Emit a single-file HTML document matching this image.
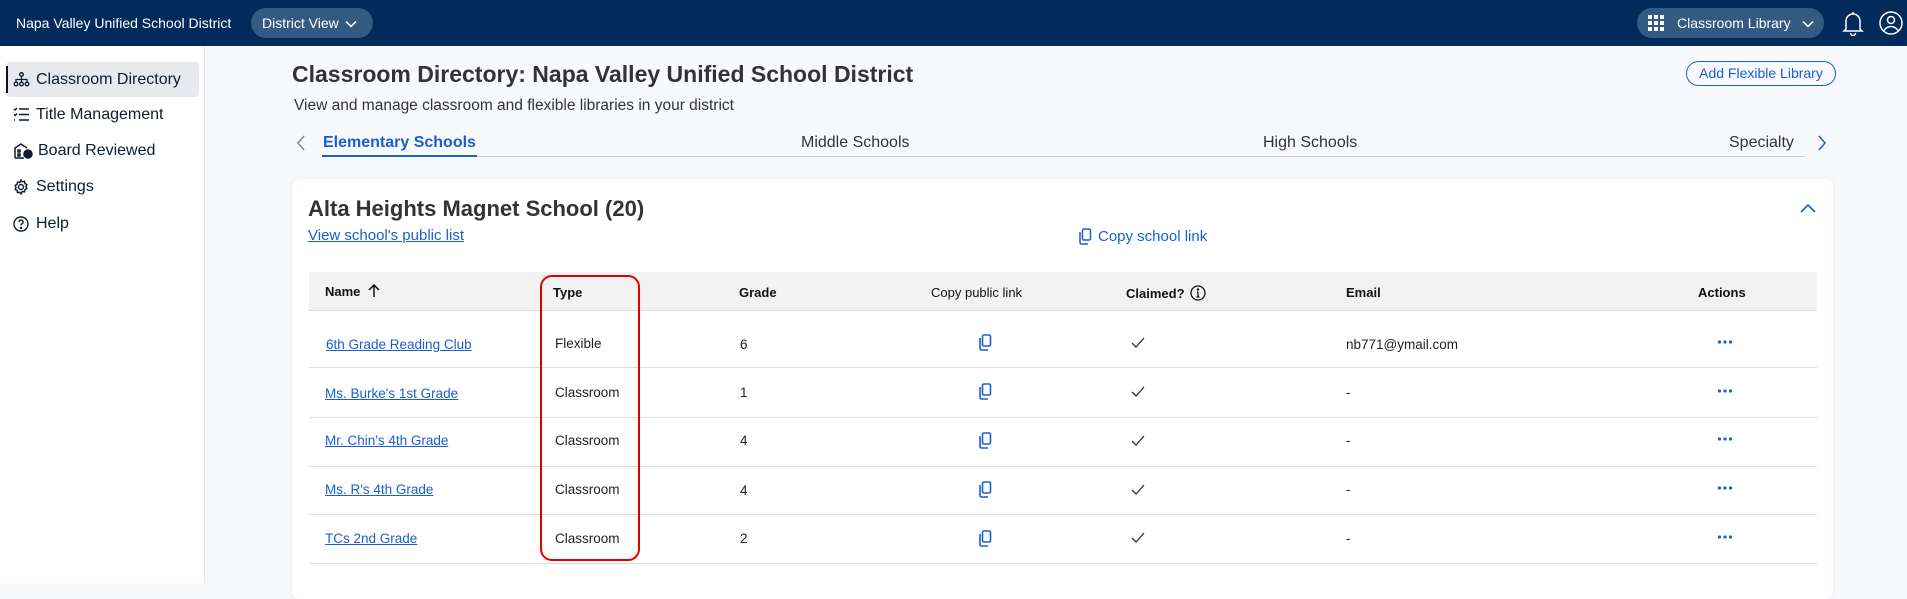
<!DOCTYPE html>
<html><head><meta charset="utf-8"><style>
*{box-sizing:border-box;margin:0;padding:0}
body{width:1907px;height:583px;overflow:hidden;background:#f7f9fd;font-family:"Liberation Sans",sans-serif;color:#222;position:relative}
.a{position:absolute;white-space:nowrap}
.top{left:0;top:0;width:1907px;height:46px;background:#022b5b}
.side{left:0;top:46px;width:205px;height:537px;background:#fff;border-right:1px solid #e6e8ec}
.si{left:6px;height:35px;width:193px;font-size:16px;color:#0d1b33;line-height:35px;padding-left:30px}
.si svg{position:absolute;left:7px;top:10px}
.card{left:292px;top:179px;width:1541px;height:420px;background:#fff;border-radius:8px;box-shadow:0 0 6px rgba(0,0,0,.05)}
.th{font-size:13px;font-weight:bold;color:#111}
.td{font-size:13.5px;color:#222}
.ln{font-size:13.5px;color:#1a5fd0;text-decoration:underline}
.hr{height:1px;background:#ddd;left:309px;width:1508px}
</style></head><body>
<div class="a top"></div>
<div class="a" style="left:16px;top:15px;font-size:14px;color:#fff">Napa Valley Unified School District</div>
<div class="a" style="left:251px;top:8px;width:122px;height:30px;border-radius:15px;background:#355a81;color:#fff;font-size:14px;line-height:30px;padding-left:11px">District View <svg width="12" height="8" viewBox="0 0 12 8" style="margin-left:2px"><path d="M1 1.5l5 5 5-5" stroke="#fff" stroke-width="1.5" fill="none"/></svg></div>
<div class="a" style="left:1637px;top:8px;width:187px;height:30px;border-radius:15px;background:#355a81;color:#fff;font-size:14px;line-height:30px;padding-left:40px">Classroom Library <svg width="12" height="8" viewBox="0 0 12 8" style="margin-left:8px"><path d="M1 1.5l5 5 5-5" stroke="#fff" stroke-width="1.5" fill="none"/></svg></div>
<svg class="a" style="left:1648px;top:15px" width="16" height="16" viewBox="0 0 16 16" fill="#fff"><rect x="0" y="0" width="4" height="4"/><rect x="6" y="0" width="4" height="4"/><rect x="12" y="0" width="4" height="4"/><rect x="0" y="6" width="4" height="4"/><rect x="6" y="6" width="4" height="4"/><rect x="12" y="6" width="4" height="4"/><rect x="0" y="12" width="4" height="4"/><rect x="6" y="12" width="4" height="4"/><rect x="12" y="12" width="4" height="4"/></svg>
<svg class="a" style="left:1841px;top:10px" width="24" height="26" viewBox="0 0 24 26" fill="none" stroke="#fff" stroke-width="1.5"><path d="M12 2v2M5 19V11a7 7 0 0 1 14 0v8l2 2H3z"/><path d="M9.5 23a2.5 2.5 0 0 0 5 0"/></svg>
<svg class="a" style="left:1879px;top:11px" width="24" height="24" viewBox="0 0 24 24" fill="none" stroke="#fff" stroke-width="1.5"><circle cx="12" cy="12" r="11"/><circle cx="12" cy="9" r="3.5"/><path d="M5 19.5c2-3 4.5-4 7-4s5 1 7 4"/></svg>

<div class="a side"></div>
<div class="a" style="left:6px;top:62px;width:193px;height:35px;background:#e7e9ee;border-radius:4px"></div>
<div class="a" style="left:6px;top:66px;width:2px;height:27px;background:#111"></div>
<div class="a si" style="top:62px"><svg width="17" height="15" viewBox="0 0 17 15" fill="none" stroke="#0d1b33" stroke-width="1.3"><circle cx="8.5" cy="2.5" r="1.8"/><path d="M8.5 4.5v3M3 10V7.5h11V10M8.5 7.5V10"/><circle cx="3" cy="12" r="1.8"/><circle cx="8.5" cy="12" r="1.8"/><circle cx="14" cy="12" r="1.8"/></svg>Classroom Directory</div>
<div class="a si" style="top:97px"><svg width="17" height="15" viewBox="0 0 17 15" fill="none" stroke="#0d1b33" stroke-width="1.5"><path d="M6 2h10M6 7.5h10M6 13h10M1 2l1 1 2-2M1 7.5l1 1 2-2M1 13h1"/></svg>Title Management</div>
<div class="a si" style="top:133px;padding-left:32px"><svg width="20" height="16" viewBox="0 0 20 16" fill="none" stroke="#0d1b33" stroke-width="1.5"><path d="M2 15V5l6-4 6 4M2 15h9"/><rect x="5" y="7" width="2" height="2"/><rect x="5" y="11" width="2" height="2"/><circle cx="15" cy="11" r="4" fill="#0d1b33"/></svg>Board Reviewed</div>
<div class="a si" style="top:169px"><svg width="16" height="16" viewBox="0 0 16 16" fill="none" stroke="#0d1b33" stroke-width="1.4"><circle cx="8" cy="8" r="2.5"/><path d="M8 1l1.3 1.8 2.2-.5.4 2.2 2 1.1-1 2 1 2-2 1-.4 2.3-2.2-.5L8 15l-1.3-1.8-2.2.5-.4-2.3-2-1 1-2-1-2 2-1.1.4-2.2 2.2.5z"/></svg>Settings</div>
<div class="a si" style="top:206px"><svg width="16" height="16" viewBox="0 0 16 16" fill="none" stroke="#0d1b33" stroke-width="1.4"><circle cx="8" cy="8" r="7"/><path d="M6 6a2 2 0 1 1 2.5 2c-.5.2-.5.7-.5 1.5"/><circle cx="8" cy="12" r=".5" fill="#0d1b33"/></svg>Help</div>

<div class="a" style="left:292px;top:61px;font-size:23px;font-weight:bold;color:#333">Classroom Directory: Napa Valley Unified School District</div>
<div class="a" style="left:294px;top:97px;font-size:15.5px;color:#333">View and manage classroom and flexible libraries in your district</div>
<div class="a" style="left:1686px;top:61px;width:150px;height:25px;border:1.5px solid #1a5fd0;border-radius:13px;color:#1a5fd0;font-size:14px;line-height:22px;text-align:center">Add Flexible Library</div>

<svg class="a" style="left:296px;top:135px" width="10" height="16" viewBox="0 0 10 16"><path d="M8 1L2 8l6 7" stroke="#888" stroke-width="1.5" fill="none"/></svg>
<div class="a" style="left:322px;top:156px;width:1484px;height:1px;background:#ccc"></div>
<div class="a" style="left:322px;top:155px;width:155px;height:2px;background:#1a5fd0"></div>
<div class="a" style="left:323px;top:134px;font-size:16px;font-weight:bold;color:#1a5fd0">Elementary Schools</div>
<div class="a" style="left:801px;top:134px;font-size:16px;color:#333">Middle Schools</div>
<div class="a" style="left:1263px;top:134px;font-size:16px;color:#333">High Schools</div>
<div class="a" style="left:1729px;top:134px;font-size:16px;color:#333">Specialty</div>
<svg class="a" style="left:1817px;top:135px" width="10" height="16" viewBox="0 0 10 16"><path d="M2 1l6 7-6 7" stroke="#1a5fd0" stroke-width="1.5" fill="none"/></svg>

<div class="a card"></div>
<div class="a" style="left:308px;top:196px;font-size:22px;font-weight:bold;color:#333">Alta Heights Magnet School (20)</div>
<svg class="a" style="left:1800px;top:203px" width="16" height="10" viewBox="0 0 16 10"><path d="M1 9l7-7 7 7" stroke="#1a5fd0" stroke-width="1.6" fill="none"/></svg>
<div class="a" style="left:308px;top:227px;font-size:15px;color:#1a5fd0;text-decoration:underline">View school's public list</div>
<svg class="a" style="left:1078px;top:228px" width="14" height="17" viewBox="0 0 14 17" fill="none" stroke="#1a5fd0" stroke-width="1.5"><rect x="4.5" y="1" width="8" height="11" rx="1.5"/><path d="M2 4v10.5a1.5 1.5 0 0 0 1.5 1.5H10"/></svg>
<div class="a" style="left:1098px;top:228px;font-size:15px;color:#1a5fd0">Copy school link</div>

<div class="a" style="left:309px;top:272px;width:1508px;height:39px;background:#f2f2f2;border-bottom:1px solid #ddd"></div>
<div class="a th" style="left:325px;top:284px">Name <svg width="12" height="14" viewBox="0 0 12 14" style="margin-left:4px;vertical-align:-2px"><path d="M6 13V1M1 6l5-5 5 5" stroke="#111" stroke-width="1.5" fill="none"/></svg></div>
<div class="a th" style="left:553px;top:285px">Type</div>
<div class="a th" style="left:739px;top:285px">Grade</div>
<div class="a th" style="left:931px;top:285px;font-weight:normal;color:#111;font-size:13px">Copy public link</div>
<div class="a th" style="left:1126px;top:285px">Claimed? <svg width="16" height="16" viewBox="0 0 16 16" style="vertical-align:-3px;margin-left:2px" fill="none" stroke="#111" stroke-width="1.3"><circle cx="8" cy="8" r="7"/><path d="M8 7v5M6.5 12h3M7 7h1"/><circle cx="8" cy="4.5" r=".6" fill="#111"/></svg></div>
<div class="a th" style="left:1346px;top:285px">Email</div>
<div class="a th" style="left:1698px;top:285px">Actions</div>

<div class="a hr" style="top:367px"></div>
<div class="a hr" style="top:417px"></div>
<div class="a hr" style="top:466px"></div>
<div class="a hr" style="top:514px"></div>
<div class="a hr" style="top:563px"></div>

<div class="a ln" style="left:326px;top:337px">6th Grade Reading Club</div>
<div class="a ln" style="left:325px;top:386px">Ms. Burke's 1st Grade</div>
<div class="a ln" style="left:325px;top:433px">Mr. Chin's 4th Grade</div>
<div class="a ln" style="left:325px;top:482px">Ms. R's 4th Grade</div>
<div class="a ln" style="left:325px;top:531px">TCs 2nd Grade</div>

<div class="a td" style="left:555px;top:336px">Flexible</div>
<div class="a td" style="left:555px;top:385px">Classroom</div>
<div class="a td" style="left:555px;top:433px">Classroom</div>
<div class="a td" style="left:555px;top:482px">Classroom</div>
<div class="a td" style="left:555px;top:531px">Classroom</div>

<div class="a td" style="left:740px;top:337px">6</div>
<div class="a td" style="left:740px;top:385px">1</div>
<div class="a td" style="left:740px;top:433px">4</div>
<div class="a td" style="left:740px;top:483px">4</div>
<div class="a td" style="left:740px;top:531px">2</div>

<div class="a td" style="left:1346px;top:337px">nb771@ymail.com</div>
<div class="a td" style="left:1346px;top:385px">-</div>
<div class="a td" style="left:1346px;top:433px">-</div>
<div class="a td" style="left:1346px;top:482px">-</div>
<div class="a td" style="left:1346px;top:531px">-</div>

<svg width="0" height="0" style="position:absolute"><defs>
<symbol id="cp" viewBox="0 0 14 17"><g fill="none" stroke="#1a5fd0" stroke-width="1.6"><rect x="4.5" y="1" width="8" height="11" rx="1.5"/><path d="M2 4v10.5a1.5 1.5 0 0 0 1.5 1.5H10"/></g></symbol>
<symbol id="ck" viewBox="0 0 14 12"><path d="M1 6l4 4 8-9" fill="none" stroke="#333" stroke-width="1.3"/></symbol>
<symbol id="dt" viewBox="0 0 16 4"><g fill="#1a5fd0"><circle cx="2.5" cy="2" r="1.6"/><circle cx="8" cy="2" r="1.6"/><circle cx="13.5" cy="2" r="1.6"/></g></symbol>
</defs></svg>
<svg class="a" style="left:978px;top:334px" width="14" height="17"><use href="#cp"/></svg>
<svg class="a" style="left:978px;top:383px" width="14" height="17"><use href="#cp"/></svg>
<svg class="a" style="left:978px;top:432px" width="14" height="17"><use href="#cp"/></svg>
<svg class="a" style="left:978px;top:481px" width="14" height="17"><use href="#cp"/></svg>
<svg class="a" style="left:978px;top:530px" width="14" height="17"><use href="#cp"/></svg>

<svg class="a" style="left:1131px;top:337px" width="14" height="12"><use href="#ck"/></svg>
<svg class="a" style="left:1131px;top:386px" width="14" height="12"><use href="#ck"/></svg>
<svg class="a" style="left:1131px;top:435px" width="14" height="12"><use href="#ck"/></svg>
<svg class="a" style="left:1131px;top:484px" width="14" height="12"><use href="#ck"/></svg>
<svg class="a" style="left:1131px;top:532px" width="14" height="12"><use href="#ck"/></svg>

<svg class="a" style="left:1717px;top:340px" width="16" height="4"><use href="#dt"/></svg>
<svg class="a" style="left:1717px;top:389px" width="16" height="4"><use href="#dt"/></svg>
<svg class="a" style="left:1717px;top:437px" width="16" height="4"><use href="#dt"/></svg>
<svg class="a" style="left:1717px;top:486px" width="16" height="4"><use href="#dt"/></svg>
<svg class="a" style="left:1717px;top:535px" width="16" height="4"><use href="#dt"/></svg>

<div class="a" style="left:540px;top:275px;width:100px;height:286px;border:2.5px solid #e00000;border-radius:12px"></div>
</body></html>
